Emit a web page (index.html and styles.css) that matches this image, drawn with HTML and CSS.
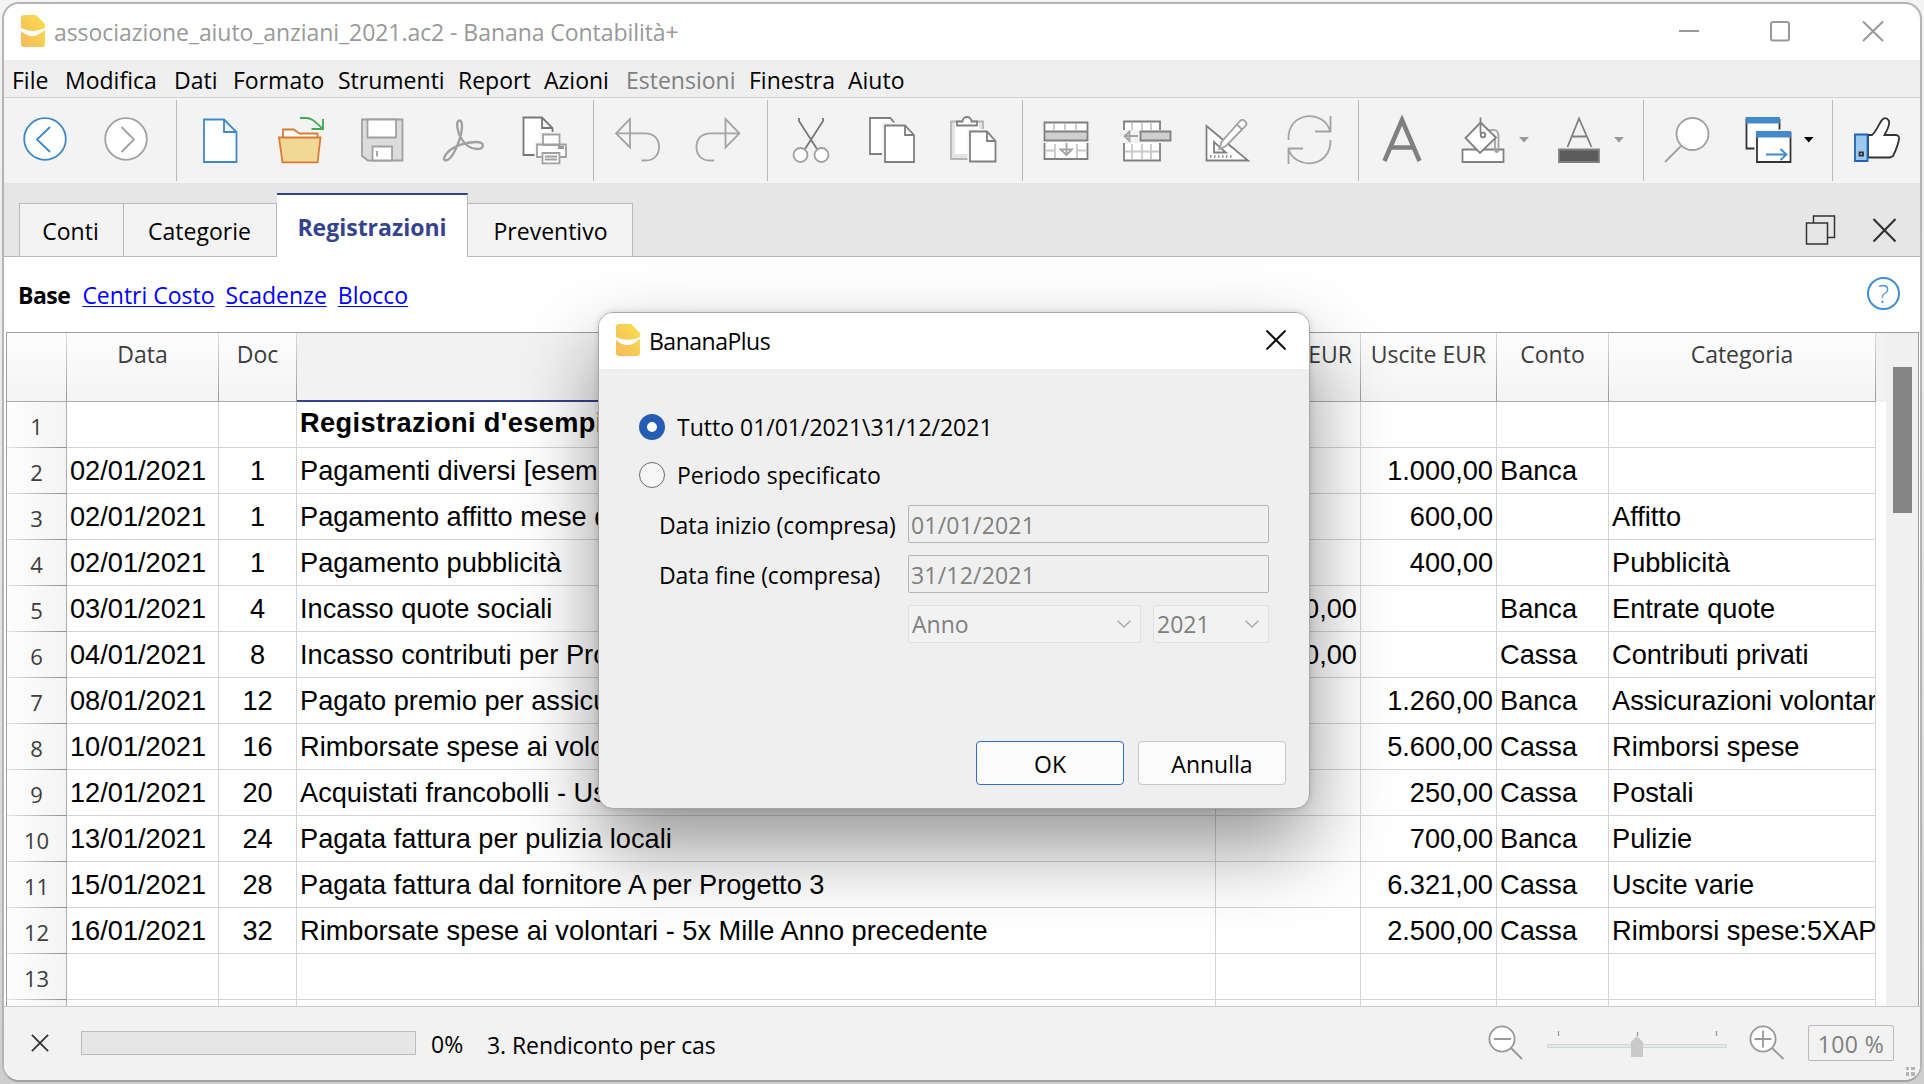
FILE: index.html
```html
<!DOCTYPE html>
<html lang="it">
<head>
<meta charset="utf-8">
<title>associazione_aiuto_anziani_2021.ac2 - Banana Contabilità+</title>
<link rel="stylesheet" href="styles.css">
</head>
<body>
<div class="window">
  <header class="titlebar">
    <svg class="logo" viewBox="0 0 24 32"><use href="#banana"/></svg>
    <h1 class="title">associazione_aiuto_anziani_2021.ac2 - Banana Contabilità+</h1>
    <svg class="controls" viewBox="1679 16 206 30" fill="none" stroke="#999" stroke-width="2"><path d="M1679 31H1699M1863 21.500l20 19.500M1883 21.500l-20 19.500"/><rect x="1771" y="22" width="18" height="18.500" rx="2"/></svg>
  </header>
  <nav class="menu">
    <span>File</span><span>Modifica</span><span>Dati</span><span>Formato</span><span>Strumenti</span><span>Report</span><span>Azioni</span><span class="off">Estensioni</span><span>Finestra</span><span>Aiuto</span>
  </nav>
  <div class="toolbar">
    <div class="group">
      <svg viewBox="21 115 48 48" class="blue"><circle cx="45" cy="139" r="20.800"/><path d="M50 127L37 139.500L50 152"/></svg>
      <svg viewBox="102 115 48 48" class="gray"><circle cx="126" cy="139" r="20.800"/><path class="nofill" d="M121.500 127L134 139.500L121.500 152"/></svg>
    </div>
    <div class="group">
      <svg viewBox="196 115 48 48" class="blue"><path d="M204 119.500H224L236.500 132V162H204ZM224 119.500V132H236.500"/></svg>
      <svg viewBox="277 115 48 48" stroke="#d97b35" fill="#fff"><path d="M283 138V129.500H293.500L299.500 133.500H317.500V138"/><path fill="#f1d995" d="M279 137.500H320.500L317.500 162.300H282.500Z"/><path class="nofill" stroke="#43a852" d="M300 118H306C313 118 316 123 322.500 128.500M323 119V129H311.500"/></svg>
      <svg viewBox="358 115 48 48" class="gray"><path fill="#dcdcdc" d="M362 119.500H402.500V160.500H368L362 156Z"/><path d="M367.500 119.500H396V137.500H367.500ZM372.500 146.500H392V160.500H372.500ZM377 151V156.500"/></svg>
      <svg viewBox="439 115 48 48" class="gray"><path class="nofill" stroke-width="2.400" d="M459.500 120.500C455.500 120.500 457 131 461 138C465 145 471 149 477 149C485 149 485 142 476 142C466 142 453 146 447 153C443 158 443 161 447 160C452 159 458 145 460 138C462.500 130 463 120.500 459.500 120.500Z"/></svg>
      <svg viewBox="521 115 48 48" class="gray"><path stroke="#777" d="M524.500 117.500H543L553.500 128V155H524.500ZM543 117.500V128H553.500"/><path stroke="#f3f3f3" stroke-width="5" d="M544 134.500H560.500V144.500H567V157H538V144.500H544Z"/><path d="M544 134.500H560.500V145H544ZM538 144.500H567V157H538Z"/><path stroke="none" fill="#999" d="M559 146h6v3h-6z"/><path d="M543.500 153H560.500V163.300H543.500ZM546 156.500H558M546 159.500H558"/></svg>
    </div>
    <div class="group">
      <svg viewBox="613 115 48 48" class="lite"><path d="M616 133.300L630 119V147.500ZM616 133.300H645C654 133.300 659 139 659 147C659 155 654 160.500 646 160.500H641.500"/></svg>
      <svg viewBox="694 115 48 48" class="lite"><path d="M739.500 133.300L725.500 119V147.500ZM739.500 133.300H710.500C701.500 133.300 696.500 139 696.500 147C696.500 155 701.500 160.500 709.500 160.500H714"/></svg>
    </div>
    <div class="group">
      <svg viewBox="787 115 48 48" class="gray"><path stroke="#777" d="M799 118V121L817 149M823 118V121L805 149"/><circle cx="800.500" cy="155" r="7"/><circle cx="821.500" cy="155" r="7"/></svg>
      <svg viewBox="868 115 48 48" class="dark"><path d="M870 118H890.500L895 124V154H870Z"/><path stroke="#f3f3f3" stroke-width="6" d="M885 125.500H905L914 135V162H885Z"/><path d="M885 125.500H905L914 135V162H885ZM905 125.500V135H914"/></svg>
      <svg viewBox="949 115 48 48" class="dark"><path stroke="#b5b5b5" fill="#e4e4e4" d="M951 121.500H983V159H951Z"/><path stroke="none" d="M955 123h24v31h-24z"/><path d="M957 125.500V121.500H962.500C962.500 115.500 971.500 115.500 971.500 121.500H977V125.500Z"/><path stroke="#f3f3f3" stroke-width="5" d="M970 131.500H987L995.500 141V161.500H970Z"/><path d="M970 131.500H987L995.500 141V161.500H970ZM987 131.500V141H995.500"/></svg>
    </div>
    <div class="group">
      <svg viewBox="1042 115 48 48" class="dark"><path stroke="none" d="M1044.500 122.500h43v36.500h-43z"/><path class="nofill" d="M1044.500 131V122.500H1087.500V131M1044.500 143V159H1087.500V143"/><path stroke="#c8c8c8" d="M1054 124V130M1065 124V130M1076 124V130M1055 144V158M1077 144V158M1046 150.500H1055M1077 150.500H1086"/><path fill="#cfcfcf" d="M1044.500 131.500H1087.500V140.500H1044.500Z"/><path class="lite" d="M1066.500 143V155M1060.500 149.500H1072L1066.500 155Z"/></svg>
      <svg viewBox="1123 115 48 48" class="dark"><path d="M1124 130V121.500H1160V130M1124 143V160.500H1160V143"/><path stroke="#c8c8c8" d="M1132 123V130M1142 123V130M1151 123V130M1132 144V159M1142 144V159M1151 144V159M1125 151.500H1159"/><path fill="#cfcfcf" d="M1140.500 131.500H1170.500V140.500H1140.500Z"/><path class="lite" d="M1138 136H1125M1129.500 131.500V141L1124.500 136Z"/></svg>
      <svg viewBox="1204 115 48 48" class="dark"><path d="M1206.500 126V160.500H1248ZM1214 142V152.500H1226Z"/><path stroke="#999" stroke-dasharray="1.500 2.500" stroke-width="3" d="M1210 156.500H1234"/><path class="gray" stroke="#999" d="M1219.500 149L1221.500 142L1240 121C1243 118 1248.500 122.500 1245.500 126L1226 146ZM1237 124.500L1242 129.500"/></svg>
      <svg viewBox="1285 115 48 48" class="lite"><path d="M1288.500 140C1287 111 1324 109 1330 131M1330.500 116V131.500H1315M1330.500 140C1331 169 1294 170 1288.500 148.500M1288.500 164V148.500H1303"/></svg>
    </div>
    <div class="group font-group">
      <svg viewBox="1378 115 48 48" class="nofill" stroke="#808080"><path d="M1384.500 161L1402 120L1419.500 161M1390 147.500H1414"/></svg>
      <svg viewBox="1459 115 48 48" class="dark"><path d="M1462.500 149.500H1503.500V162H1462.500Z"/><path class="lite" d="M1487 131C1496 128 1498.500 131 1498.500 136V149C1498.500 153 1495 153 1495 149V138"/><path d="M1480.500 122.500L1496 137.500L1480 153L1465.500 138Z"/><path d="M1480.500 117.500V133"/><circle cx="1483" cy="135" r="2.300"/></svg>
      <svg viewBox="1518 115 11 48" class="caret"><path d="M1519 137H1529L1524 142.500Z"/></svg>
      <svg viewBox="1555 115 48 48" class="dark"><path class="nofill" d="M1567.500 147L1579 118.500L1591.500 147M1571 136.500H1587"/><path fill="#5c5c5c" d="M1559 149.500H1599V162H1559Z"/></svg>
      <svg viewBox="1614 115 11 48" class="caret"><path d="M1614 137H1624L1619 142.500Z"/></svg>
    </div>
    <div class="group find-group">
      <svg viewBox="1664 115 48 48" class="gray"><circle cx="1692.500" cy="134" r="16"/><path d="M1681 146L1665 162"/></svg>
      <svg viewBox="1744 115 48 48" stroke="#333" fill="#fff"><path d="M1746.500 120V148.500H1779.500V120Z"/><path stroke="#4489c9" fill="#4489c9" d="M1746.500 118H1779V122.500H1746.500Z"/><path stroke="#f3f3f3" stroke-width="5" d="M1757 132H1790.500V162H1757Z"/><path d="M1757 132V162H1790.500V132"/><path stroke="#4489c9" fill="#4489c9" d="M1757 132H1790V136.500H1757Z"/><path class="blue nofill" d="M1766 154.500H1786M1780.500 149L1786.500 154.500L1780.500 160"/></svg>
      <svg viewBox="1803 115 11 48" class="caret black"><path d="M1804 137H1813.500L1808.700 142.500Z"/></svg>
    </div>
    <div class="group">
      <svg viewBox="1851 115 48 48" stroke="#333" fill="#fff"><path d="M1867 135H1871C1876 131 1878 123 1881 120C1883 117.500 1886 117 1888 121C1889 126 1886 130 1883.500 135H1895C1897 135 1898.500 137 1898 139C1897 146 1894 152 1892 156L1889 157.500H1867Z"/><path stroke="#2062b5" fill="#9cc9ee" d="M1854 134.500H1866.500V161H1854Z"/><path d="M1858.500 152.500h3.500v3h-3.500z"/></svg>
    </div>
  </div>
  <div class="tabs">
    <div class="tab">Conti</div><div class="tab">Categorie</div><div class="tab active">Registrazioni</div><div class="tab">Preventivo</div>
    <svg class="tabtools" viewBox="1804 214 94 32" fill="none" stroke="#333" stroke-width="1.500"><path d="M1806.500 223H1827.500V244H1806.500ZM1813.500 223V216H1834.500V237.500H1828"/><path stroke-width="2.200" d="M1873.500 219L1895.500 241.500M1895.500 219L1873.500 241.500"/></svg>
  </div>
  <div class="views">
    <b>Base</b><a>Centri Costo</a><a>Scadenze</a><a>Blocco</a>
    <span class="help">?</span>
  </div>
  <div class="sheet">
    <table>
      <colgroup><col class="c0"><col class="c1"><col class="c2"><col class="c3"><col class="c4"><col class="c5"><col class="c6"><col class="c7"></colgroup>
      <thead><tr><th></th><th>Data</th><th>Doc</th><th class="current"></th><th>Entrate EUR</th><th>Uscite EUR</th><th>Conto</th><th>Categoria</th></tr></thead>
      <tbody>
        <tr class="bold"><th>1</th><td></td><td></td><td>Registrazioni d'esempio</td><td></td><td></td><td></td><td></td></tr>
        <tr><th>2</th><td>02/01/2021</td><td>1</td><td>Pagamenti diversi [esempio]</td><td></td><td>1.000,00</td><td>Banca</td><td></td></tr>
        <tr><th>3</th><td>02/01/2021</td><td>1</td><td>Pagamento affitto mese di</td><td></td><td>600,00</td><td></td><td>Affitto</td></tr>
        <tr><th>4</th><td>02/01/2021</td><td>1</td><td>Pagamento pubblicità</td><td></td><td>400,00</td><td></td><td>Pubblicità</td></tr>
        <tr><th>5</th><td>03/01/2021</td><td>4</td><td>Incasso quote sociali</td><td>5.000,00</td><td></td><td>Banca</td><td>Entrate quote</td></tr>
        <tr><th>6</th><td>04/01/2021</td><td>8</td><td>Incasso contributi per Progetto</td><td>5.000,00</td><td></td><td>Cassa</td><td>Contributi privati</td></tr>
        <tr><th>7</th><td>08/01/2021</td><td>12</td><td>Pagato premio per assicurazione</td><td></td><td>1.260,00</td><td>Banca</td><td>Assicurazioni volontari</td></tr>
        <tr><th>8</th><td>10/01/2021</td><td>16</td><td>Rimborsate spese ai volontari</td><td></td><td>5.600,00</td><td>Cassa</td><td>Rimborsi spese</td></tr>
        <tr><th>9</th><td>12/01/2021</td><td>20</td><td>Acquistati francobolli - Uso</td><td></td><td>250,00</td><td>Cassa</td><td>Postali</td></tr>
        <tr><th>10</th><td>13/01/2021</td><td>24</td><td>Pagata fattura per pulizia locali</td><td></td><td>700,00</td><td>Banca</td><td>Pulizie</td></tr>
        <tr><th>11</th><td>15/01/2021</td><td>28</td><td>Pagata fattura dal fornitore A per Progetto 3</td><td></td><td>6.321,00</td><td>Cassa</td><td>Uscite varie</td></tr>
        <tr><th>12</th><td>16/01/2021</td><td>32</td><td>Rimborsate spese ai volontari - 5x Mille Anno precedente</td><td></td><td>2.500,00</td><td>Cassa</td><td>Rimborsi spese:5XAP</td></tr>
        <tr><th>13</th><td></td><td></td><td></td><td></td><td></td><td></td><td></td></tr>
        <tr><th></th><td></td><td></td><td></td><td></td><td></td><td></td><td></td></tr>
      </tbody>
    </table>
    <div class="corner"></div>
    <div class="scrollbar"><div class="thumb"></div></div>
  </div>
  <footer class="status">
    <svg class="stop" viewBox="0 0 20 20" stroke="#333" stroke-width="2"><path d="M1 1L19 19M19 1L1 19"/></svg>
    <div class="progress"></div>
    <span class="percent">0%</span>
    <span class="message">3. Rendiconto per cas</span>
    <svg class="zoombar" viewBox="1488 1020 300 44" fill="none" stroke="#999" stroke-width="1.800"><circle cx="1502" cy="1039" r="12.600" fill="#fff"/><path d="M1494 1039H1511M1511 1048L1522 1059"/><path fill="#e6eaea" stroke="#d0d5d5" stroke-width="1" d="M1547.500 1044.500H1726.500V1047.500H1547.500Z"/><path stroke-width="1.300" d="M1558.500 1031V1036M1637.500 1032V1036M1716.500 1031V1036"/><path stroke="none" fill="#c9c9c9" d="M1631 1057V1042L1637 1036L1643 1042V1057Z"/><circle cx="1763" cy="1039" r="12.600" fill="#fff"/><path d="M1754.500 1039H1771.500M1763 1030.500V1047.500M1772 1048L1783.500 1059"/></svg>
    <div class="zoomvalue">100 %</div>
    <svg class="grip" viewBox="0 0 9 9" fill="#b5b5b5"><path d="M0 0h3v3H0zM5 0h4v3H5zM0 5h3v4H0zM5 5h4v4H5z"/></svg>
  </footer>
</div>

<div class="dialog">
  <header class="dialog-title">
    <svg class="logo" viewBox="0 0 24 32"><defs><linearGradient id="peel" x1="1" y1="0" x2="0" y2="1"><stop offset="0" stop-color="#f9e04c"/><stop offset="1" stop-color="#f4b95c"/></linearGradient></defs><g id="banana"><path fill="url(#peel)" d="M3 0H15L24 9V29Q24 32 21 32H3Q0 32 0 29V3Q0 0 3 0Z"/><path fill="#fff" d="M0 13Q12 19 24 13V14.500Q12 27 0 16Z"/></g></svg>
    <h2>BananaPlus</h2>
    <svg class="dialog-close" viewBox="0 0 20 20" stroke="#111" stroke-width="2"><path d="M0.500 0.500L19.500 19.500M19.500 0.500L0.500 19.500"/></svg>
  </header>
  <div class="dialog-body">
    <label class="radio"><span class="dot on"></span>Tutto 01/01/2021\31/12/2021</label>
    <label class="radio"><span class="dot"></span>Periodo specificato</label>
    <div class="form">
      <span class="label">Data inizio (compresa)</span><div class="field">01/01/2021</div>
      <span class="label">Data fine (compresa)</span><div class="field">31/12/2021</div>
      <span></span>
      <div class="combos">
        <div class="combo">Anno<svg viewBox="0 0 14 8"><path d="M0.700 0.700L7 7L13.300 0.700"/></svg></div>
        <div class="combo">2021<svg viewBox="0 0 14 8"><path d="M0.700 0.700L7 7L13.300 0.700"/></svg></div>
      </div>
    </div>
    <div class="buttons"><button class="primary">OK</button><button>Annulla</button></div>
  </div>
</div>
</body>
</html>
```
FILE: styles.css
```css
* { box-sizing: border-box; }

body {
  margin: 0;
  height: 1084px;
  overflow: hidden;
  background: linear-gradient(#f4f4f4, #e2e2e2 60%, #cecece);
  font: 23px/1.2 "Open Sans", "Noto Sans", sans-serif;
  color: #000;
}

svg { display: block; flex: none; }
h1, h2 { margin: 0; font: inherit; }

.window {
  margin: 2px 2px 0 2px;
  height: 1080px;
  width: 1920px;
  display: flex;
  flex-direction: column;
  border: 2px solid #b4b4b4;
  border-bottom-color: #a2a2a2;
  border-radius: 17px;
  background: #fff;
  overflow: hidden;
}

.logo { width: 24px; height: 32px; }

.titlebar { flex: none; height: 56px; display: flex; align-items: center; padding: 0 35px 2px 17px; }
.title { margin: 3px 0 0 9px; color: #999; flex: 1; letter-spacing: -0.06px; }
.controls { width: 206px; height: 30px; }

.menu {
  flex: none;
  height: 38px;
  padding: 7px 0 0 8px;
  display: grid;
  grid-template-columns: 53px 109px 59px 105px 120px 86px 82px 123px 99px 80px;
  background: #efefef;
  border-bottom: 1px solid #d0d0d0;
}
.menu .off { color: #808080; }

.toolbar { flex: none; height: 85px; display: flex; background: #f3f3f3; padding: 2px 0; }
.group { display: flex; align-items: center; gap: 33px; padding: 0 25px 0 19px; height: 81px; border-right: 1px solid #b9b9b9; }
.group:first-child { padding: 0 26px 0 17px; }
.group:last-child { border: 0; }
.group svg { width: 48px; height: 48px; margin-top: -4px; stroke-width: 1.8px; overflow: visible; }
.group svg.caret { width: 11px; fill: #999; }
.group svg.caret.black { fill: #000; }
.blue { stroke: #3f88c8; fill: #fff; }
.gray { stroke: #a0a0a0; fill: #fff; }
.lite { stroke: #a3a3a3; fill: none; }
.dark { stroke: #808080; fill: #fff; }
.nofill { fill: none; }
.group.font-group { gap: 11px; padding-right: 18px; }
.font-group svg:first-child { margin-right: 22px; stroke-width: 4.5px; }
.font-group .caret + svg { margin-left: 15px; }
.group.find-group { gap: 11px; padding: 0 18px 0 20px; }
.find-group svg:first-child { margin-right: 21px; }

.tabs {
  flex: none;
  height: 74px;
  display: flex;
  align-items: flex-end;
  padding-left: 15px;
  background: #e6e6e6;
  box-shadow: inset 0 -1px #b5b5b5;
}
.tab { height: 54px; padding: 14px 1px 0 0; text-align: center; background: #f3f3f3; border: 1px solid #b9b9b9; border-left-width: 0; width: 153px; }
.tab:first-child { width: 105px; border-left-width: 1px; padding-right: 2px; }
.tab.active { width: 191px; height: 64px; padding: 19px 0 0; background: #fff; border-bottom: 0; border-top: 2px solid #33418f; color: #36438f; font-weight: 700; }
.tab:nth-child(4) { width: 165px; padding: 14px 0 0 1px; }
.tabtools { width: 94px; height: 32px; margin: 0 22px 11px auto; }

.views { flex: none; height: 75px; display: flex; padding: 25px 20px 0 14px; }
.views b { letter-spacing: -0.5px; margin-right: 1px; }
.views a { color: #00f; text-decoration: underline; text-decoration-thickness: 1px; text-underline-offset: 2px; margin-left: 11px; }
.help {
  width: 33px;
  height: 33px;
  margin: -5px 0 0 auto;
  border: 2px solid #3f8fd6;
  border-radius: 50%;
  color: #3f8fd6;
  font-size: 26px;
  font-weight: 300;
  line-height: 29px;
  text-align: center;
}

.sheet { flex: 1; min-height: 0; display: flex; margin: 0 1px 0 2px; border: 1px solid #9d9d9d; border-bottom: 0; overflow: hidden; }
table { flex: none; width: 1869px; height: 713px; table-layout: fixed; border-collapse: separate; border-spacing: 0; }
.c0 { width: 60px; } .c1 { width: 152px; } .c2 { width: 78px; } .c3 { width: 919px; }
.c4 { width: 145px; } .c5 { width: 136px; } .c6 { width: 112px; } .c7 { width: 267px; }
th, td { padding: 0; white-space: nowrap; overflow: hidden; }
th { font-weight: 400; color: #3d3d3d; }
thead th {
  height: 69px;
  padding: 8px 1px 0 0;
  vertical-align: top;
  border-bottom: 1px solid #ababab;
  background: linear-gradient(#dcdcdc, #9a9a9a) right / 1px 100% no-repeat, linear-gradient(#fdfdfd, #f4f4f4);
}
thead .current { background: #f2f2f2; border-bottom: 2px solid #33418f; }
tbody tr { height: 46px; }
tbody th {
  padding-top: 2px;
  font-size: 22px;
  border-right: 1px solid #ababab;
  background: linear-gradient(90deg, #e6e6e6, #8f8f8f) bottom / 100% 1px no-repeat, linear-gradient(90deg, #fdfdfd, #f4f4f4);
}
td {
  height: 46px;
  padding: 1px 0 0 3px;
  font: 27.2px/30px "Liberation Sans", Arial, sans-serif;
  border-right: 1px solid #d3d3d3;
  border-bottom: 1px solid #d3d3d3;
}
td:nth-child(3) { padding: 1px 0 0; text-align: center; }
td:nth-child(5), td:nth-child(6) { padding: 1px 3px 0 0; text-align: right; }
.bold td { font-weight: 700; padding: 0 0 3px 3px; letter-spacing: 0.4px; }
.corner { width: 10px; height: 69px; background: #f2f2f2; }
.scrollbar { flex: 1; background: #f0f0f0; padding: 34px 0 0 7px; }
.thumb { width: 19px; height: 146px; background: #858585; }

.status {
  flex: none;
  position: relative;
  height: 74px;
  display: flex;
  align-items: flex-start;
  background: #f2f2f2;
  border-top: 1px solid #cacaca;
}
.stop { width: 20px; height: 20px; margin: 26px 0 0 26px; padding: 1px; }
.progress { width: 335px; height: 24px; margin: 24px 0 0 31px; background: #e6e6e6; border: 1px solid #bcbcbc; }
.percent { margin: 24px 0 0 15px; width: 56px; }
.message { margin-top: 25px; letter-spacing: -0.08px; }
.zoombar { width: 300px; height: 44px; margin: 13px 20px 0 auto; }
.zoomvalue { width: 86px; height: 36px; margin: 18px 26px 0 0; border: 1px solid #b9b9b9; border-radius: 2px; color: #808080; text-align: center; line-height: 36px; letter-spacing: 0.4px; }
.grip { position: absolute; width: 9px; height: 9px; right: 5px; bottom: 4px; }

.dialog {
  position: absolute;
  left: 598px;
  top: 312px;
  width: 712px;
  height: 497px;
  border: 1.500px solid #a8a8a8;
  border-radius: 15px;
  overflow: hidden;
  background: #efefef;
  box-shadow: 0 38px 80px rgba(0, 0, 0, 0.42), 0 0 6px rgba(0, 0, 0, 0.15);
}
.dialog-title { height: 56px; display: flex; align-items: center; padding: 0 23px 2px 17px; background: #fff; }
.dialog-title h2 { margin: 4px 0 0 9px; flex: 1; letter-spacing: -0.5px; }
.dialog-close { width: 20px; height: 20px; }
.dialog-body { padding: 34px 41px 0 40px; }
.radio { display: flex; align-items: center; height: 48px; line-height: 52px; }
.dot { width: 26px; height: 26px; margin-right: 12px; border: 1.500px solid #6a6a6a; border-radius: 50%; background: #f6f6f6; }
.dot.on { border: 8px solid #255db4; background: #fff; }
.form { display: grid; grid-template-columns: 249px 361px; row-gap: 12px; margin-top: 6px; padding-left: 20px; line-height: 38px; }
.label { letter-spacing: -0.08px; padding-top: 1px; height: 38px; }
.field { height: 38px; padding-left: 2px; border: 1px solid #b5b5b5; border-radius: 2px; color: #808080; letter-spacing: 0.2px; line-height: 39px; }
.combos { display: grid; grid-template-columns: 233px 116px; gap: 12px; }
.combo { height: 38px; padding: 0 9px 0 3px; line-height: 39px; display: flex; align-items: center; justify-content: space-between; border: 1px solid #e0e0e0; border-radius: 2px; background: #f2f2f2; color: #808080; }
.combo svg { width: 14px; height: 8px; fill: none; stroke: #a8a8a8; stroke-width: 1.400; }
.buttons { display: flex; justify-content: flex-end; gap: 14px; margin: 98px -18px 0 0; }
button { width: 148px; height: 44px; padding: 3px 0 0; font: inherit; color: #000; background: #fbfbfb; border: 1px solid #c6c6c6; border-radius: 4px; }
.primary { border-color: #2f6fc4; }
```
